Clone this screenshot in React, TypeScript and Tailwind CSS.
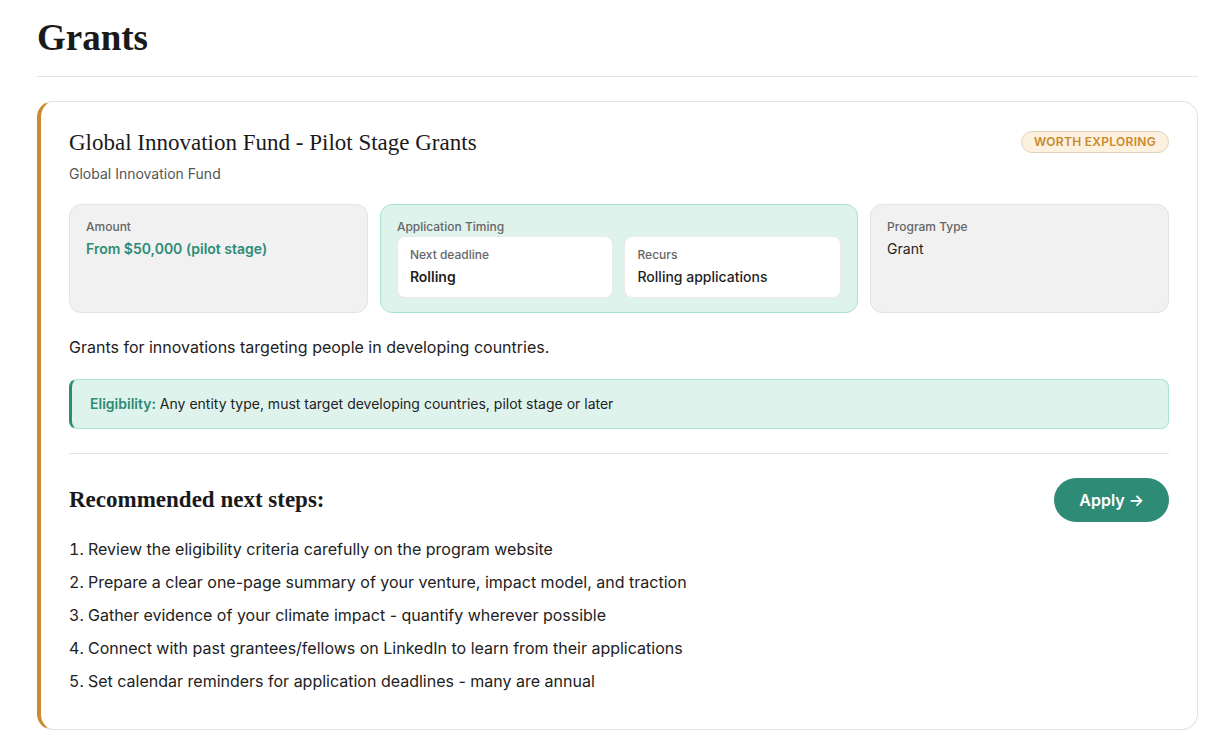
const serif = { fontFamily: '"Liberation Serif", "DejaVu Serif", serif' }

const steps = [
  'Review the eligibility criteria carefully on the program website',
  'Prepare a clear one-page summary of your venture, impact model, and traction',
  'Gather evidence of your climate impact - quantify wherever possible',
  'Connect with past grantees/fellows on LinkedIn to learn from their applications',
  'Set calendar reminders for application deadlines - many are annual',
]

export default function App() {
  return (
    <div
      className="min-h-screen bg-white pl-[37px] pr-5 pt-[15px] pb-10 text-[#1f1f1f]"
      style={{ fontFamily: 'Inter, "Liberation Sans", sans-serif' }}
    >
      <h1 className="border-b border-[#e4e4e4] pb-[15px] text-[37px] leading-[46px] font-bold text-[#1a1a1a]" style={serif}>
        Grants
      </h1>

      {/* Grant card */}
      <div className="mt-6 rounded-2xl border border-[#e2e2e2] border-l-4 border-l-[#cc8a2e] bg-white px-7 pt-[26px] pb-9">
        <div className="flex items-start justify-between">
          <div>
            <h2 className="text-[23px] leading-[29px] text-[#1a1a1a]" style={serif}>
              Global Innovation Fund - Pilot Stage Grants
            </h2>
            <p className="mt-[7px] text-sm text-[#555]">Global Innovation Fund</p>
          </div>
          <span className="mt-[3px] rounded-full border border-[#e2d3bd] bg-[#fcf0df] px-3 py-[2px] text-xs font-semibold tracking-wide text-[#c98a2e]">
            WORTH EXPLORING
          </span>
        </div>

        <div className="mt-5 grid grid-cols-[1fr_1.6fr_1fr] gap-3">
          <div className="rounded-xl border border-[#e3e3e3] bg-[#f1f1f1] px-4 pt-[14px]">
            <div className="text-xs leading-4 font-medium text-[#666]">Amount</div>
            <div className="mt-1 text-sm font-semibold text-[#2e8b75]">From $50,000 (pilot stage)</div>
          </div>

          <div className="rounded-xl border border-[#a9e2cf] bg-[#dff3ed] px-4 pt-[14px] pb-3.5">
            <div className="text-xs leading-4 font-medium text-[#666]">Application Timing</div>
            <div className="mt-[1px] grid grid-cols-2 gap-[11px]">
              <div className="rounded-lg border border-[#eaeaea] bg-white px-3 pt-2.5 pb-2.5">
                <div className="text-xs leading-4 font-medium text-[#666]">Next deadline</div>
                <div className="mt-1 text-sm font-semibold text-[#1f1f1f]">Rolling</div>
              </div>
              <div className="rounded-lg border border-[#eaeaea] bg-white px-3 pt-2.5 pb-2.5">
                <div className="text-xs leading-4 font-medium text-[#666]">Recurs</div>
                <div className="mt-1 text-sm font-medium text-[#1f1f1f]">Rolling applications</div>
              </div>
            </div>
          </div>

          <div className="rounded-xl border border-[#e3e3e3] bg-[#f1f1f1] px-4 pt-[14px]">
            <div className="text-xs leading-4 font-medium text-[#666]">Program Type</div>
            <div className="mt-1 text-sm text-[#1f1f1f]">Grant</div>
          </div>
        </div>

        <p className="mt-[22px] text-base text-[#222]">Grants for innovations targeting people in developing countries.</p>

        <div className="mt-5 rounded-lg border border-[#a9e2cf] border-l-[3px] border-l-[#2e8b75] bg-[#dff3ed] py-3.5 pl-[18px] pr-4 text-sm text-[#222]">
          <span className="font-semibold text-[#2e8b75]">Eligibility:</span> Any entity type, must target developing countries, pilot stage or later
        </div>

        <div className="mt-6 border-t border-[#e4e4e4] pt-6">
          <div className="flex items-center justify-between">
            <h3 className="text-[23px] font-bold text-[#1a1a1a]" style={serif}>
              Recommended next steps:
            </h3>
            <button className="h-11 rounded-full bg-[#2e8b75] px-[25px] text-base font-semibold text-white">
              Apply →
            </button>
          </div>
          <ol className="mt-[15px] flex list-inside list-decimal flex-col gap-[9px] text-base leading-6 text-[#222]">
            {steps.map((s) => (
              <li key={s}>{s}</li>
            ))}
          </ol>
        </div>
      </div>
    </div>
  )
}
